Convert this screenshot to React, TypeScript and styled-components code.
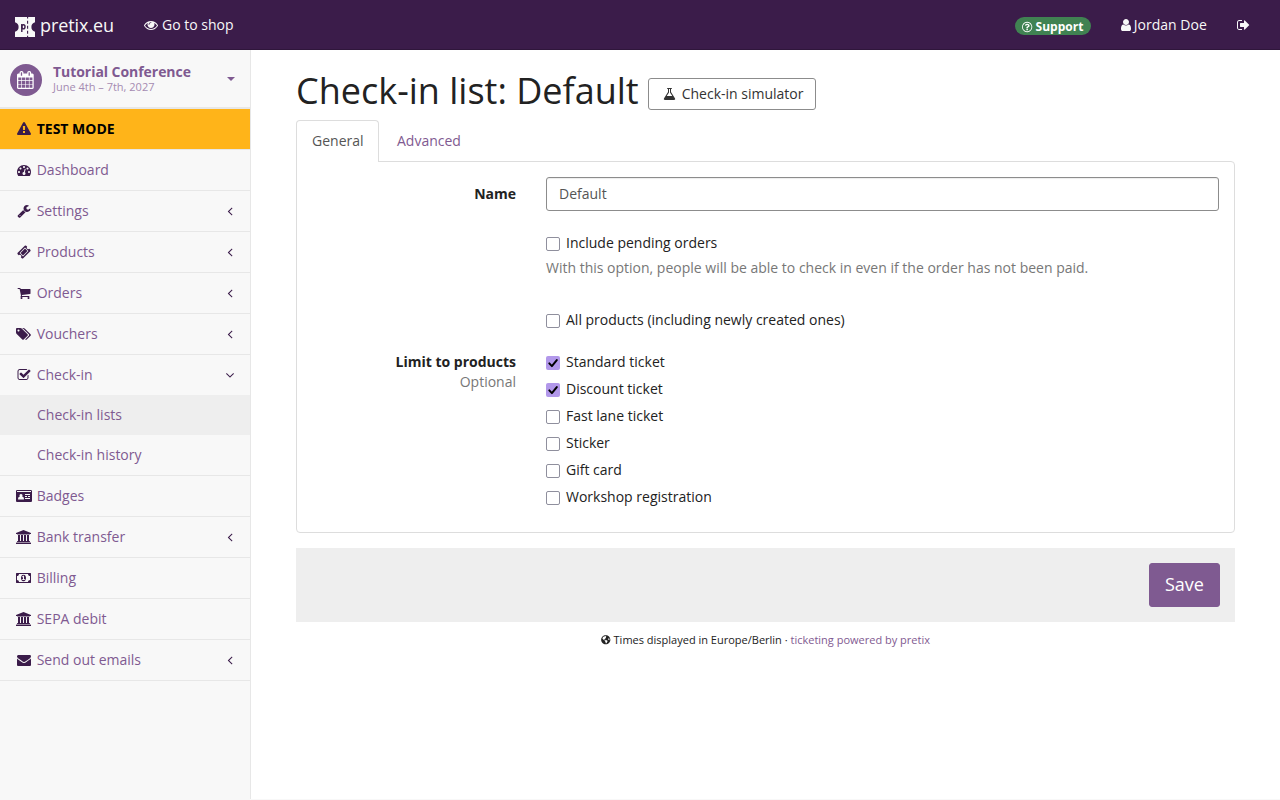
import React from 'react';
import styled, { createGlobalStyle } from 'styled-components';
import { FaGlobeAmericas } from 'react-icons/fa';

const GlobalStyle = createGlobalStyle`
  *, *::before, *::after { box-sizing: border-box; }
  body {
    margin: 0;
    background: #f8f8f8;
    color: #222;
    font: 14px/20px "Open Sans", "Noto Sans", sans-serif;
  }
  a { color: #7f5a91; text-decoration: none; }
`;

/* ---------- icons: drawn on a 1792-unit em square ---------- */

const glyphs = {
  eye: { w: 1792, d: 'M1664 960q-152-236-381-353 61 104 61 225 0 185-131.5 316.5t-316.5 131.5-316.5-131.5-131.5-316.5q0-121 61-225-229 117-381 353 133 205 333.5 326.5t434.5 121.5 434.5-121.5 333.5-326.5zm-720-384q0-20-14-34t-34-14q-125 0-214.5 89.5t-89.5 214.5q0 20 14 34t34 14 34-14 14-34q0-86 61-147t147-61q20 0 34-14t14-34zm848 384q0 34-20 69-140 230-376.5 368.5t-499.5 138.5-499.5-139-376.5-368q-20-35-20-69t20-69q140-229 376.5-368t499.5-139 499.5 139 376.5 368q20 35 20 69z' },
  warning: { w: 1792, d: 'M1024 1375v-190q0-14-9.5-23.5t-22.5-9.5h-192q-13 0-22.5 9.5t-9.5 23.5v190q0 14 9.5 23.5t22.5 9.5h192q13 0 22.5-9.5t9.5-23.5zm-2-374l18-459q0-12-10-19-13-11-24-11h-220q-11 0-24 11-10 7-10 21l17 457q0 10 10 16.5t24 6.5h185q14 0 23.5-6.5t10.5-16.5zm-14-934l768 1408q35 63-2 126-17 29-46.5 46t-63.5 17h-1536q-34 0-63.5-17t-46.5-46q-37-63-2-126l768-1408q17-31 47-49t65-18 65 18 47 49z' },
  gauge: { w: 1792, d: 'M384 1152q0-53-37.5-90.5t-90.5-37.5-90.5 37.5-37.5 90.5 37.5 90.5 90.5 37.5 90.5-37.5 37.5-90.5zm192-448q0-53-37.5-90.5t-90.5-37.5-90.5 37.5-37.5 90.5 37.5 90.5 90.5 37.5 90.5-37.5 37.5-90.5zm428 481l101-382q6-26-7.5-48.5t-38.5-29.5-48 6.5-30 39.5l-101 382q-60 5-107 43.5t-63 98.5q-20 77 20 146t117 89 146-20 89-117q16-60-6-117t-72-91zm660-33q0-53-37.5-90.5t-90.5-37.5-90.5 37.5-37.5 90.5 37.5 90.5 90.5 37.5 90.5-37.5 37.5-90.5zm-640-640q0-53-37.5-90.5t-90.5-37.5-90.5 37.5-37.5 90.5 37.5 90.5 90.5 37.5 90.5-37.5 37.5-90.5zm448 192q0-53-37.5-90.5t-90.5-37.5-90.5 37.5-37.5 90.5 37.5 90.5 90.5 37.5 90.5-37.5 37.5-90.5zm320 448q0 261-141 483-19 29-54 29h-1402q-35 0-54-29-141-221-141-483 0-182 71-348t191-286 286-191 348-71 348 71 286 191 191 286 71 348z' },
  wrench: { w: 1792, d: 'M448 1472q0-26-19-45t-45-19-45 19-19 45 19 45 45 19 45-19 19-45zm644-420l-682 682q-37 37-90 37-52 0-91-37l-106-108q-38-36-38-90 0-53 38-91l681-681q39 98 114.5 173.5t173.5 114.5zm634-435q0 39-23 106-47 134-164.5 217.5t-258.5 83.5q-185 0-316.5-131.5t-131.5-316.5 131.5-316.5 316.5-131.5q58 0 121.5 16.5t107.5 46.5q16 11 16 28t-16 28l-293 169v224l193 107q5-3 79-48.5t135.5-81 70.5-35.5q15 0 23.5 10t8.5 25z' },
  ticket: { w: 1792, d: 'M1024 452l316 316-572 572-316-316zm-211 979l618-618q19-19 19-45t-19-45l-362-362q-18-18-45-18t-45 18l-618 618q-19 19-19 45t19 45l362 362q18 18 45 18t45-18zm889-637l-907 908q-37 37-90.5 37t-90.5-37l-126-126q56-56 56-136t-56-136-136-56-136 56l-125-126q-37-37-37-90.5t37-90.5l907-906q37-37 90.5-37t90.5 37l125 125q-56 56-56 136t56 136 136 56 136-56l126 125q37 37 37 90.5t-37 90.5z' },
  cart: { w: 1792, d: 'M704 1536q0 52-38 90t-90 38-90-38-38-90 38-90 90-38 90 38 38 90zm896 0q0 52-38 90t-90 38-90-38-38-90 38-90 90-38 90 38 38 90zm128-1088v512q0 24-16.5 42.5t-40.5 21.5l-1044 122q13 60 13 70 0 16-24 64h920q26 0 45 19t19 45-19 45-45 19h-1024q-26 0-45-19t-19-45q0-11 8-31.5t16-36 21.5-40 15.5-29.5l-177-823h-204q-26 0-45-19t-19-45 19-45 45-19h256q16 0 28.5 6.5t19.5 15.5 13 24.5 8 26 5.5 29.5 4.5 26h1201q26 0 45 19t19 45z' },
  tags: { w: 1920, d: 'M448 448q0-53-37.5-90.5t-90.5-37.5-90.5 37.5-37.5 90.5 37.5 90.5 90.5 37.5 90.5-37.5 37.5-90.5zm1067 576q0 53-37 90l-491 492q-39 37-91 37-53 0-90-37l-715-716q-38-37-64.5-101t-26.5-117v-416q0-52 38-90t90-38h416q53 0 117 26.5t102 64.5l715 714q37 39 37 91zm384 0q0 53-37 90l-491 492q-39 37-91 37-36 0-59-14t-53-45l470-470q37-37 37-90 0-52-37-91l-715-714q-38-38-102-64.5t-117-26.5h224q53 0 117 26.5t102 64.5l715 714q37 39 37 91z' },
  check: { w: 1792, d: 'M1472 930v318q0 119-84.5 203.5t-203.5 84.5h-832q-119 0-203.5-84.5t-84.5-203.5v-832q0-119 84.5-203.5t203.5-84.5h832q63 0 117 25 15 7 18 23 3 17-9 29l-49 49q-10 10-23 10-3 0-9-2-23-6-45-6h-832q-66 0-113 47t-47 113v832q0 66 47 113t113 47h832q66 0 113-47t47-113v-254q0-13 9-22l64-64q10-10 23-10 6 0 12 3 20 8 20 29zm231-489l-814 814q-24 24-57 24t-57-24l-430-430q-24-24-24-57t24-57l110-110q24-24 57-24t57 24l263 263 647-647q24-24 57-24t57 24l110 110q24 24 24 57t-24 57z' },
  card: { w: 2048, d: 'M160 128h1728q66 0 113 47t47 113v1216q0 66-47 113t-113 47h-1728q-66 0-113-47t-47-113v-1216q0-66 47-113t113-47zM128 256v128h1792v-128zM640 640a192 192 0 0 0-150 312q-234 30-234 328 0 72 72 72h624q72 0 72-72 0-298-234-328a192 192 0 0 0-150-312zM1152 640v128h640v-128zM1152 896v128h256v-128zM1536 896v128h256v-128zM1152 1152v128h640v-128z' },
  bank: { w: 1920, d: 'M960 0l960 384v128h-128q0 26-20.5 45t-48.5 19h-1526q-28 0-48.5-19t-20.5-45h-128v-128zm-704 640h256v768h128v-768h256v768h128v-768h256v768h128v-768h256v768h59q28 0 48.5 19t20.5 45v64h-1664v-64q0-26 20.5-45t48.5-19h59v-768zm1595 960q28 0 48.5 19t20.5 45v128h-1920v-128q0-26 20.5-45t48.5-19h1782z' },
  money: { w: 1920, d: 'M768 1152h384v-96h-128v-448h-114l-148 137 77 80q42-37 55-57h2v288h-128v96zm512-256q0 70-21 142t-59.5 134-101.5 101-138 39-138-39-101.5-101-59.5-134-21-142 21-142 59.5-134 101.5-101 138-39 138 39 101.5 101 59.5 134 21 142zm512 256v-512q-106 0-181-75t-75-181h-1152q0 106-75 181t-181 75v512q106 0 181 75t75 181h1152q0-106 75-181t181-75zm128-832v1152q0 26-19 45t-45 19h-1792q-26 0-45-19t-19-45v-1152q0-26 19-45t45-19h1792q26 0 45 19t19 45z' },
  envelope: { w: 1792, d: 'M1792 710v794q0 66-47 113t-113 47h-1472q-66 0-113-47t-47-113v-794q44 49 101 87 362 246 497 345 57 42 92.5 65.5t94.5 48 110 24.5h2q51 0 110-24.5t94.5-48 92.5-65.5q170-123 498-345 57-39 100-87zm0-294q0 79-49 151t-122 123q-376 261-468 325-10 7-42.5 31t-54 38.5-52 32.5-57.5 27-50 9h-2q-23 0-50-9t-57.5-27-52-32.5-54-38.5-42.5-31q-91-64-262-182.5t-205-142.5q-62-42-117-115.5t-55-136.5q0-78 41.5-130t118.5-52h1472q65 0 112.5 47t47.5 113z' },
  user: { x: 256, w: 1280, d: 'M1536 1399q0 109-62.5 187t-150.5 78h-854q-88 0-150.5-78t-62.5-187q0-85 8.5-160.5t31.5-152 58.5-131 94-89 134.5-34.5q131 128 313 128t313-128q76 0 134.5 34.5t94 89 58.5 131 31.5 152 8.5 160.5zm-256-887q0 159-112.5 271.5t-271.5 112.5-271.5-112.5-112.5-271.5 112.5-271.5 271.5-112.5 271.5 112.5 112.5 271.5z' },
  signOut: { x: 64, w: 1568, d: 'M704 1440q0 4 1 20t.5 26.5-3 23.5-10 19.5-20.5 6.5h-320q-119 0-203.5-84.5t-84.5-203.5v-704q0-119 84.5-203.5t203.5-84.5h320q13 0 22.5 9.5t9.5 22.5q0 4 1 20t.5 26.5-3 23.5-10 19.5-20.5 6.5h-320q-66 0-113 47t-47 113v704q0 66 47 113t113 47h312l11.5 1 11.5 3 8 5.5 7 9 2 13.5zm928-544q0 26-19 45l-544 544q-19 19-45 19t-45-19-19-45v-288h-448q-26 0-45-19t-19-45v-384q0-26 19-45t45-19h448v-288q0-26 19-45t45-19 45 19l544 544q19 19 19 45z' },
  question: { x: 128, w: 1536, d: 'M1008 1200v160q0 14-9 23t-23 9h-160q-14 0-23-9t-9-23v-160q0-14 9-23t23-9h160q14 0 23 9t9 23zm256-496q0 50-15 90t-45.5 69-52 44-59.5 36q-32 18-46.5 28t-26 24-11.5 29v32q0 14-9 23t-23 9h-160q-14 0-23-9t-9-23v-68q0-35 10.5-64.5t24-47.5 39-35.5 41-25.5 44.5-21q53-25 75-43t22-49q0-42-43.5-71.5t-95.5-29.5q-56 0-95 27-29 20-80 83-9 12-25 12-11 0-19-6l-108-82q-10-7-12-20t5-23q122-192 349-192 129 0 238.5 89.5t109.5 214.5zm-368-448q-130 0-248.5 51t-204 136.5-136.5 204-51 248.5 51 248.5 136.5 204 204 136.5 248.5 51 248.5-51 204-136.5 136.5-204 51-248.5-51-248.5-136.5-204-204-136.5-248.5-51zm768 640q0 209-103 385.5t-279.5 279.5-385.5 103-385.5-103-279.5-279.5-103-385.5 103-385.5 279.5-279.5 385.5-103 385.5 103 279.5 279.5 103 385.5z' },
  flask: { x: 64, w: 1664, d: 'M1591 1448q56 89 21.5 152.5t-140.5 63.5h-1152q-106 0-140.5-63.5t21.5-152.5l503-793v-399h-64q-26 0-45-19t-19-45 19-45 45-19h512q26 0 45 19t19 45-19 45-45 19h-64v399zm-779-725l-272 429h712l-272-429-20-31v-436h-128v436z' },
  calendar: { x: 64, w: 1664, d: 'M192 1664h288v-288h-288v288zm352 0h320v-288h-320v288zm-352-352h288v-320h-288v320zm352 0h320v-320h-320v320zm-352-384h288v-288h-288v288zm736 736h320v-288h-320v288zm-384-736h320v-288h-320v288zm768 736h288v-288h-288v288zm-384-352h320v-320h-320v320zm-352-864v-288q0-13-9.5-22.5t-22.5-9.5h-64q-13 0-22.5 9.5t-9.5 22.5v288q0 13 9.5 22.5t22.5 9.5h64q13 0 22.5-9.5t9.5-22.5zm736 864h288v-320h-288v320zm-384-384h320v-288h-320v288zm384 0h288v-288h-288v288zm32-480v-288q0-13-9.5-22.5t-22.5-9.5h-64q-13 0-22.5 9.5t-9.5 22.5v288q0 13 9.5 22.5t22.5 9.5h64q13 0 22.5-9.5t9.5-22.5zm384-64v1280q0 52-38 90t-90 38h-1408q-52 0-90-38t-38-90v-1280q0-52 38-90t90-38h128v-96q0-66 47-113t113-47h64q66 0 113 47t47 113v96h384v-96q0-66 47-113t113-47h64q66 0 113 47t47 113v96h128q52 0 90 38t38 90z' },
  angleLeft: { w: 1792, d: 'M1203 544q0 13-10 23l-393 393 393 393q10 10 10 23t-10 23l-50 50q-10 10-23 10t-23-10l-466-466q-10-10-10-23t10-23l466-466q10-10 23-10t23 10l50 50q10 10 10 23z' },
  angleDown: { w: 1792, d: 'M1395 736q0 13-10 23l-466 466q-10 10-23 10t-23-10l-466-466q-10-10-10-23t10-23l50-50q10-10 23-10t23 10l393 393 393-393q10-10 23-10t23 10l50 50q10 10 10 23z' },
};

type GlyphName = keyof typeof glyphs;

const Svg = styled.svg`
  display: block;
  flex: none;
  overflow: visible;
`;

function Icon({ name, size = 14 }: { name: GlyphName; size?: number }) {
  const glyph: { x?: number; w: number; d: string } = glyphs[name];
  return (
    <Svg
      width={(glyph.w / 1792) * size}
      height={size}
      viewBox={`${glyph.x ?? 0} 0 ${glyph.w} 1792`}
      fill="currentColor"
      fillRule={name === 'card' ? 'evenodd' : 'nonzero'}
      aria-hidden
    >
      <path d={glyph.d} />
    </Svg>
  );
}

function Logo() {
  return (
    <Svg width="20" height="20" viewBox="0 0 20 20" aria-hidden>
      <path fill="#f8f8f8" d="M0 0h20v5.2a5 5 0 0 0 0 9.6V20H0v-5.2a5 5 0 0 0 0-9.6z" />
      <path stroke="#3b1c4a" strokeWidth="1.1" d="M12.6 0v1.6M12.6 3.8v3M12.6 8.8v3M12.6 13.8v3M12.6 18.8V20" />
      <path stroke="#3b1c4a" strokeWidth="1.4" d="M6.8 7v8" />
      <ellipse cx="8.4" cy="9.8" rx="1.6" ry="2.1" fill="none" stroke="#3b1c4a" strokeWidth="1.4" />
    </Svg>
  );
}

/* ---------- top bar ---------- */

const Navbar = styled.header`
  display: flex;
  align-items: center;
  height: 50px;
  padding: 0 31px 0 15px;
  background: #3b1c4a;
  border-bottom: 1px solid #2f163b;
  color: #f8f8f8;
`;

const Brand = styled.div`
  display: flex;
  align-items: center;
  gap: 5px;
  width: 99px;
  margin-right: 30px;
  padding-top: 1px;
  font-size: 18px;
  letter-spacing: -0.08px;
  white-space: nowrap;
  svg { margin-top: 4px; }
`;

const NavItem = styled.div<{ $gap?: number; $left?: number }>`
  display: flex;
  align-items: center;
  gap: ${(p) => p.$gap ?? 4}px;
  margin-left: ${(p) => p.$left ?? 0}px;
`;

const Spacer = styled.div`
  flex: 1;
`;

const SupportBadge = styled.div`
  display: flex;
  align-items: center;
  gap: 3px;
  width: 76px;
  height: 18px;
  margin-top: 3px;
  padding: 1px 0 0 7px;
  border-radius: 9px;
  background: #408252;
  color: #fff;
  font-size: 12px;
  font-weight: 700;
`;

/* ---------- sidebar ---------- */

const Body = styled.div`
  display: flex;
  height: 749px;
`;

const Sidebar = styled.nav`
  flex: none;
  width: 251px;
  border-right: 1px solid #e7e7e7;
  background: #f8f8f8;
`;

const EventSwitch = styled.div`
  display: flex;
  align-items: center;
  height: 59px;
  padding: 0 15px 0 9.5px;
  border-bottom: 2px solid #e7e7e7;
  color: #7f5a91;
`;

const EventBadge = styled.div`
  display: flex;
  align-items: center;
  justify-content: center;
  width: 32.5px;
  height: 32.5px;
  margin: 3px 11px 0 0;
  border-radius: 50%;
  background: #7f5a91;
  color: #fff;
  svg { margin: 0 0 1px 0; }
`;

const EventText = styled.div`
  flex: 1;
  line-height: 15px;
  margin-top: 1px;
`;

const EventName = styled.div`
  font-weight: 700;
  letter-spacing: -0.05px;
`;

const EventDate = styled.div`
  color: #a58bb2;
  font-size: 11px;
`;

const Caret = styled.span`
  border: 4px solid transparent;
  border-top-color: #7f5a91;
  border-bottom: 0;
`;

const MenuRow = styled.a<{ $warn?: boolean; $open?: boolean }>`
  display: flex;
  align-items: center;
  height: ${(p) => (p.$open ? 40 : 41)}px;
  padding: 0 13px 0 15px;
  border-bottom: ${(p) => (p.$open ? 0 : 1)}px solid #e7e7e7;
  background: ${(p) => (p.$warn ? '#ffb419' : 'transparent')};
  && { color: ${(p) => (p.$warn ? '#000' : '#7f5a91')}; }
  font-weight: ${(p) => (p.$warn ? 700 : 400)};
`;

const IconSlot = styled.span<{ $wide?: boolean }>`
  display: flex;
  justify-content: center;
  width: 18px;
  margin-right: 3.7px;
  padding-right: ${(p) => (p.$wide ? 1 : 0)}px;
  color: #3b1c4a;
`;

const RowLabel = styled.span`
  flex: 1;
`;

const Chevron = styled.span`
  color: #3b1c4a;
`;

const SubMenu = styled.div`
  border-bottom: 1px solid #e7e7e7;
`;

const SubRow = styled.a<{ $active?: boolean }>`
  display: block;
  height: 40px;
  padding: 10px 0 10px 37px;
  background: ${(p) => (p.$active ? '#eee' : 'transparent')};
`;

/* ---------- main column ---------- */

const Main = styled.main`
  flex: 1;
  padding: 20px 45px 0;
  background: #fff;
`;

const Heading = styled.div`
  display: flex;
  align-items: flex-end;
  gap: 9px;
  height: 40px;
  margin-bottom: 10px;
`;

const Title = styled.h1`
  margin: 0;
  font-size: 36px;
  font-weight: 400;
  line-height: 38px;
`;

const SimulatorButton = styled.button`
  display: flex;
  align-items: center;
  gap: 6px;
  width: 168px;
  height: 32px;
  padding: 0 0 0 14px;
  border: 1px solid #8c8c8c;
  border-radius: 3px;
  background: #fff;
  color: #333;
  font: inherit;
  white-space: nowrap;
`;

const Tabs = styled.div`
  display: flex;
  gap: 2px;
  height: 41px;
`;

const Tab = styled.a<{ $active?: boolean }>`
  height: 42px;
  padding: 10px 15px;
  border: 1px solid ${(p) => (p.$active ? '#ddd' : 'transparent')};
  border-bottom: 0;
  border-radius: 4px 4px 0 0;
  ${(p) => p.$active && 'position: relative; width: 83px; padding-right: 0; background: #fff; && { color: #555; }'}
`;

const Panel = styled.section`
  height: 372px;
  padding: 15px;
  border: 1px solid #ddd;
  border-radius: 0 4px 4px 4px;
`;

const FormRow = styled.div<{ $after: number }>`
  display: grid;
  grid-template-columns: 204px 1fr;
  column-gap: 30px;
  margin-bottom: ${(p) => p.$after}px;
`;

const FieldLabel = styled.div<{ $top?: number }>`
  padding-top: ${(p) => p.$top ?? 0}px;
  font-weight: 700;
  text-align: right;
`;

const Optional = styled.div`
  color: #777;
  font-weight: 400;
`;

const TextInput = styled.input`
  width: 100%;
  height: 34px;
  padding: 5px 12px 7px;
  border: 1px solid #8c8c8c;
  border-radius: 3px;
  background: #fff;
  box-shadow: inset 0 1px 1px rgba(0, 0, 0, 0.075);
  color: #555;
  font: inherit;
`;

const Options = styled.div`
  display: flex;
  flex-direction: column;
  gap: 7px;
`;

const OptionLabel = styled.label`
  display: flex;
  gap: 6px;
`;

const Box = styled.span<{ $on?: boolean }>`
  width: 14px;
  height: 14px;
  margin-top: 4px;
  border: ${(p) => (p.$on ? 0 : 1)}px solid #8f8f9d;
  border-radius: 2px;
  background: ${(p) => (p.$on ? '#b298ea' : '#fff')};
`;

const HelpText = styled.p`
  margin: 5px 0 0;
  color: #777;
`;

const SaveBar = styled.div`
  display: flex;
  justify-content: flex-end;
  height: 74px;
  margin-top: 15px;
  padding: 15px;
  background: #eee;
`;

const SaveButton = styled.button`
  width: 71px;
  height: 44px;
  padding: 0 0 2px;
  border: 1px solid #7f5a91;
  border-radius: 3px;
  background: #7f5a91;
  color: #fff;
  font: inherit;
  font-size: 18px;
`;

const Footer = styled.footer`
  display: flex;
  align-items: center;
  justify-content: center;
  gap: 3px;
  margin-top: 8px;
  font-size: 11px;
`;

type Item = { icon: GlyphName; label: string; more?: boolean; open?: boolean; warn?: boolean; children?: string[] };

const items: Item[] = [
  { icon: 'warning', label: 'TEST MODE', warn: true },
  { icon: 'gauge', label: 'Dashboard' },
  { icon: 'wrench', label: 'Settings', more: true },
  { icon: 'ticket', label: 'Products', more: true },
  { icon: 'cart', label: 'Orders', more: true },
  { icon: 'tags', label: 'Vouchers', more: true },
  { icon: 'check', label: 'Check-in', open: true, children: ['Check-in lists', 'Check-in history'] },
  { icon: 'card', label: 'Badges' },
  { icon: 'bank', label: 'Bank transfer', more: true },
  { icon: 'money', label: 'Billing' },
  { icon: 'bank', label: 'SEPA debit' },
  { icon: 'envelope', label: 'Send out emails', more: true },
];

const products = [
  { name: 'Standard ticket', on: true },
  { name: 'Discount ticket', on: true },
  { name: 'Fast lane ticket' },
  { name: 'Sticker' },
  { name: 'Gift card' },
  { name: 'Workshop registration' },
];

function Option({ text, on }: { text: string; on?: boolean }) {
  return (
    <OptionLabel>
      <Box $on={on}>
        {on && (
          <Svg width="14" height="14" viewBox="0 0 14 14" fill="none" stroke="#000" strokeWidth="2" strokeLinecap="round" strokeLinejoin="round">
            <path d="M3.3 7.4l2.6 2.7 4.9-6" />
          </Svg>
        )}
      </Box>
      {text}
    </OptionLabel>
  );
}

export default function App() {
  return (
    <>
      <GlobalStyle />
      <Navbar>
        <Brand><Logo />pretix.eu</Brand>
        <NavItem><Icon name="eye" />Go to shop</NavItem>
        <Spacer />
        <SupportBadge><Icon name="question" size={12} />Support</SupportBadge>
        <NavItem $left={29.5} $gap={3}><Icon name="user" />Jordan Doe</NavItem>
        <NavItem $left={30}><Icon name="signOut" /></NavItem>
      </Navbar>
      <Body>
        <Sidebar>
          <EventSwitch>
            <EventBadge><Icon name="calendar" size={18} /></EventBadge>
            <EventText>
              <EventName>Tutorial Conference</EventName>
              <EventDate>June 4th – 7th, 2027</EventDate>
            </EventText>
            <Caret />
          </EventSwitch>
          {items.map((item) => (
            <React.Fragment key={item.label}>
              <MenuRow $warn={item.warn} $open={item.open}>
                <IconSlot $wide={glyphs[item.icon].w === 1920}><Icon name={item.icon} /></IconSlot>
                <RowLabel>{item.label}</RowLabel>
                {(item.more || item.open) && (
                  <Chevron><Icon name={item.open ? 'angleDown' : 'angleLeft'} /></Chevron>
                )}
              </MenuRow>
              {item.children && (
                <SubMenu>
                  {item.children.map((child, i) => (
                    <SubRow key={child} $active={i === 0}>{child}</SubRow>
                  ))}
                </SubMenu>
              )}
            </React.Fragment>
          ))}
        </Sidebar>
        <Main>
          <Heading>
            <Title>Check-in list: Default</Title>
            <SimulatorButton><Icon name="flask" />Check-in simulator</SimulatorButton>
          </Heading>
          <Tabs>
            <Tab $active>General</Tab>
            <Tab>Advanced</Tab>
          </Tabs>
          <Panel>
            <FormRow $after={22}>
              <FieldLabel $top={7}>Name</FieldLabel>
              <TextInput defaultValue="Default" />
            </FormRow>
            <FormRow $after={32}>
              <span />
              <div>
                <Option text="Include pending orders" />
                <HelpText>With this option, people will be able to check in even if the order has not been paid.</HelpText>
              </div>
            </FormRow>
            <FormRow $after={22}>
              <span />
              <Option text="All products (including newly created ones)" />
            </FormRow>
            <FormRow $after={0}>
              <FieldLabel>
                Limit to products
                <Optional>Optional</Optional>
              </FieldLabel>
              <Options>
                {products.map((p) => <Option key={p.name} text={p.name} on={p.on} />)}
              </Options>
            </FormRow>
          </Panel>
          <SaveBar><SaveButton>Save</SaveButton></SaveBar>
          <Footer>
            <FaGlobeAmericas size={9.5} />
            <span>Times displayed in Europe/Berlin · <a>ticketing powered by pretix</a></span>
          </Footer>
        </Main>
      </Body>
    </>
  );
}
